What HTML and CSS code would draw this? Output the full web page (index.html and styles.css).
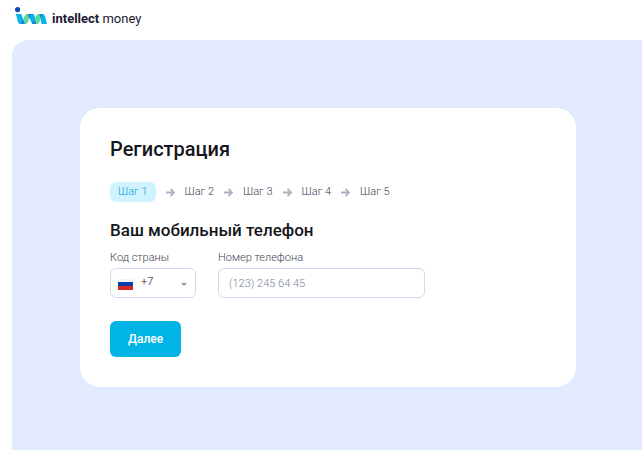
FILE: index.html
```html
<!DOCTYPE html>
<html lang="ru">
<head>
<meta charset="utf-8">
<title>Регистрация</title>
<meta name="viewport" content="width=device-width, initial-scale=1">
<link rel="stylesheet" href="styles.css">
</head>
<body>
<header class="header">
  <a class="brand" href="#">
    <svg class="brand-mark" viewBox="0 0 32 18" aria-hidden="true">
      <circle cx="2.6" cy="2.6" r="2.6" fill="#0b4bb3"/>
      <path d="M.8 7h5.400l4 10H5.400q-1.800 0-2.400-2z" fill="#08b4ec"/>
      <path d="M12.600 7h6.200l4 10h-5.600z" fill="#08b4ec"/>
      <path d="M24.200 7h3.400q1.800 0 2.400 2l2 8h-5.400z" fill="#08b4ec"/>
      <path d="M6.400 17l3.200-8q.8-2 2.600-2h4L13 15q-.8 2-2.600 2z" fill="#5adb9c"/>
      <path d="M17.800 17l3.200-8q.8-2 2.600-2h4L24.400 15q-.8 2-2.600 2z" fill="#5adb9c"/>
      <path d="M5.600 17l2.200-5L9.800 17zM12.600 7h3.800l-1.800 4.600zM17.200 17l1.800-5 2.400 5zM24.200 7h3.400l-1.600 4.400z" fill="#1b7fe0"/>
    </svg>
    <span class="brand-name"><b>intellect</b> money</span>
  </a>
</header>
<main class="panel">
  <form class="card">
    <h1 class="title">Регистрация</h1>
    <ol class="steps">
      <li class="step step-active">Шаг 1</li>
      <li class="step"><svg class="arrow" viewBox="0 0 10 10" aria-hidden="true"><path d="M0 5h9M5 1l4 4-4 4"/></svg>Шаг 2</li>
      <li class="step"><svg class="arrow" viewBox="0 0 10 10" aria-hidden="true"><path d="M0 5h9M5 1l4 4-4 4"/></svg>Шаг 3</li>
      <li class="step"><svg class="arrow" viewBox="0 0 10 10" aria-hidden="true"><path d="M0 5h9M5 1l4 4-4 4"/></svg>Шаг 4</li>
      <li class="step"><svg class="arrow" viewBox="0 0 10 10" aria-hidden="true"><path d="M0 5h9M5 1l4 4-4 4"/></svg>Шаг 5</li>
    </ol>
    <h2 class="subtitle">Ваш мобильный телефон</h2>
    <div class="fields">
      <div class="field field-code">
        <label for="code">Код страны</label>
        <div class="select-box">
          <svg class="flag" viewBox="0 0 15 11" aria-hidden="true">
            <path d="M0 0h15v4H0z" fill="#f4f4f4"/>
            <path d="M0 3h15v4H0z" fill="#0b3fac"/>
            <path d="M0 7h15v4H0z" fill="#d92a22"/>
          </svg>
          <select id="code" class="control"><option>+7</option></select>
          <svg class="caret" viewBox="0 0 6 3" aria-hidden="true"><path d="M0 0h6L3 3z" fill="#8f949c"/></svg>
        </div>
      </div>
      <div class="field field-phone">
        <label for="phone">Номер телефона</label>
        <input id="phone" class="control" type="tel" placeholder="(123) 245 64 45">
      </div>
    </div>
    <button class="submit" type="button">Далее</button>
  </form>
</main>
</body>
</html>
```
FILE: styles.css
```css
* {
  box-sizing: border-box;
}

body {
  display: flex;
  flex-direction: column;
  min-height: 100vh;
  margin: 0;
  background: #fff;
  color: #15161c;
  font: 300 11px/16px Roboto, "Noto Sans", sans-serif;
}

.header {
  display: flex;
  height: 40px;
  padding: 7px 15px;
}

.brand {
  display: flex;
  gap: 5px;
  height: 18px;
  color: #1c2033;
  text-decoration: none;
}

.brand-mark {
  width: 32px;
  height: 18px;
}

.brand-name {
  font: 400 13px/24px Roboto, Arial, sans-serif;
}

.brand-name b {
  font-weight: 700;
}

.panel {
  flex: 1;
  margin-left: 12px;
  padding: 68px 66px 63px 68px;
  border-radius: 16px 0 0 0;
  background: #e1eaff;
}

.card {
  padding: 28px 30px 30px;
  border-radius: 20px;
  background: #fff;
}

.title,
.subtitle {
  margin: 0;
  font-weight: 500;
}

.title {
  font-size: 20px;
  line-height: 26px;
}

.steps {
  display: flex;
  gap: 10px;
  margin: 20px 0 16px;
  padding: 0;
  list-style: none;
}

.step {
  display: flex;
  align-items: center;
  gap: 10px;
  height: 20px;
  color: #3c4258;
}

.step-active {
  padding: 0 8px;
  border-radius: 6px;
  background: #cff4ff;
  color: #0a9fd0;
}

.arrow {
  width: 9px;
  height: 9px;
  fill: none;
  stroke: #aab2c5;
  stroke-width: 2;
}

.subtitle {
  font-size: 17px;
  line-height: 24px;
}

.fields {
  display: flex;
  gap: 22px;
  margin: 8px 0 23px;
}

.field label {
  display: block;
  margin-bottom: 2px;
  color: #3c4258;
}

.field-code {
  width: 86px;
}

.field-phone {
  flex: 0 1 207px;
}

.control {
  display: block;
  width: 100%;
  height: 30px;
  padding: 0 10px;
  border: 1px solid #d0daee;
  border-radius: 6px;
  background: #fff;
  color: #15161c;
  font: inherit;
  appearance: none;
}

.control::placeholder {
  color: #75849c;
}

.select-box {
  position: relative;
}

.select-box .control {
  padding: 0 20px 2px 30px;
}

.flag {
  position: absolute;
  top: 11px;
  left: 8px;
  width: 15px;
  height: 11px;
}

.caret {
  position: absolute;
  top: 15px;
  right: 9px;
  width: 6px;
  height: 3px;
}

.submit {
  display: block;
  height: 36px;
  padding: 0 18px;
  border: 0;
  border-radius: 6px;
  background: #00b4e6;
  color: #fff;
  font: 500 12px/16px Roboto, "Noto Sans", sans-serif;
}
```
